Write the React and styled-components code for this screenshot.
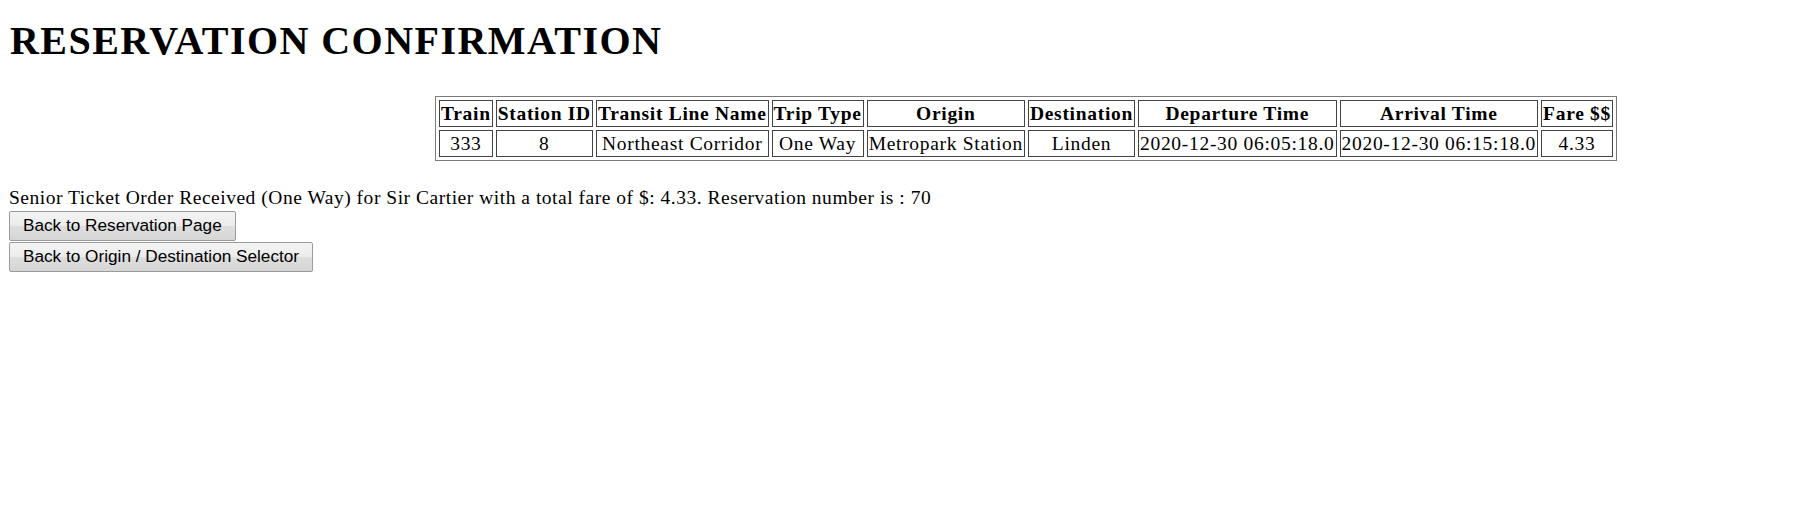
import React from "react";
import styled, { createGlobalStyle } from "styled-components";

const GlobalStyle = createGlobalStyle`
  html, body {
    margin: 0;
    background: #ffffff;
  }
  body {
    padding: 0 9px;
    font-family: "Liberation Serif", "Times New Roman", serif;
    font-size: 19.5px;
    color: #000000;
  }
`;

const Page = styled.div`
  display: flex;
  flex-direction: column;
  align-items: flex-start;
`;

const Title = styled.h1`
  margin: 19px 0 0 1px;
  font-family: "Liberation Serif", "Times New Roman", serif;
  font-size: 40px;
  letter-spacing: 1.45px;
  font-weight: bold;
  line-height: 43px;
  white-space: nowrap;
`;

const TableRow = styled.div`
  margin-top: 34px;
  padding-left: 426px;
`;

const Table = styled.table`
  border: 1px solid #7a7a7a;
  border-spacing: 3px;
  border-collapse: separate;
  font-size: 19.5px;
  letter-spacing: 0.7px;
  line-height: 21px;
`;

const Th = styled.th`
  border: 1px solid #444444;
  padding: 2px 1px;
  font-weight: bold;
  text-align: center;
  white-space: nowrap;
`;

const Td = styled.td`
  border: 1px solid #444444;
  padding: 2px 1px;
  text-align: center;
  white-space: nowrap;
`;

const Message = styled.div`
  margin-top: 26px;
  line-height: 21px;
  letter-spacing: 0.52px;
  white-space: nowrap;
`;

const Actions = styled.div`
  margin-top: 3px;
  display: flex;
  flex-direction: column;
  align-items: flex-start;
  gap: 1px;
`;

const Button = styled.button`
  font-family: "Liberation Sans", Arial, sans-serif;
  font-size: 17.2px;
  letter-spacing: 0;
  line-height: 1.15;
  color: #000000;
  padding: 4px 13px;
  border: 1px solid #9a9a9a;
  border-radius: 2px;
  background: linear-gradient(#f4f4f4 0%, #ebebeb 50%, #dedede 51%, #d6d6d6 100%);
  cursor: default;
`;

const headers = [
  "Train",
  "Station ID",
  "Transit Line Name",
  "Trip Type",
  "Origin",
  "Destination",
  "Departure Time",
  "Arrival Time",
  "Fare $$",
];

const row = [
  "333",
  "8",
  "Northeast Corridor",
  "One Way",
  "Metropark Station",
  "Linden",
  "2020-12-30 06:05:18.0",
  "2020-12-30 06:15:18.0",
  "4.33",
];

export default function App() {
  return (
    <>
      <GlobalStyle />
      <Page>
        <Title>RESERVATION CONFIRMATION</Title>
        <TableRow>
          <Table>
            <thead>
              <tr>
                {headers.map((h) => (
                  <Th key={h}>{h}</Th>
                ))}
              </tr>
            </thead>
            <tbody>
              <tr>
                {row.map((c, i) => (
                  <Td key={i}>{c}</Td>
                ))}
              </tr>
            </tbody>
          </Table>
        </TableRow>
        <Message>
          Senior Ticket Order Received (One Way) for Sir Cartier with a total fare of $: 4.33. Reservation number is : 70
        </Message>
        <Actions>
          <Button type="button">Back to Reservation Page</Button>
          <Button type="button">Back to Origin / Destination Selector</Button>
        </Actions>
      </Page>
    </>
  );
}
